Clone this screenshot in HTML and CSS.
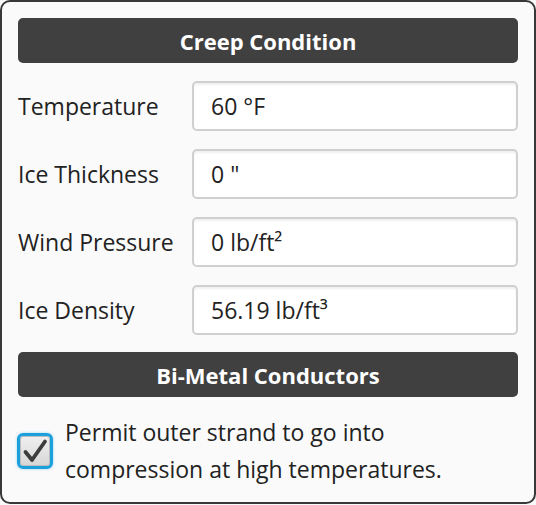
FILE: index.html
```html
<!DOCTYPE html>
<html lang="en">
<head>
  <meta charset="UTF-8" />
  <title>Creep Condition</title>
  <link rel="stylesheet" href="styles.css">
</head>
<body>
  <div class="panel">
    <div class="section-title">Creep Condition</div>
    <div class="fields">
      <label class="field-label">Temperature</label>
      <div class="field-box">60 °F</div>
      <label class="field-label">Ice Thickness</label>
      <div class="field-box">0 "</div>
      <label class="field-label">Wind Pressure</label>
      <div class="field-box">0 lb/ft²</div>
      <label class="field-label">Ice Density</label>
      <div class="field-box">56.19 lb/ft³</div>
    </div>
    <div class="section-title">Bi-Metal Conductors</div>
    <div class="check-row">
      <span class="checkbox">
        <svg width="26" height="26" viewBox="0 0 26 26">
          <path d="M3.5 14 L10 22 L23 3.5" fill="none" stroke="#3c3c3c" stroke-width="3.8" stroke-linejoin="round" stroke-linecap="round"/>
        </svg>
      </span>
      <span class="check-text">Permit outer strand to go into compression at high temperatures.</span>
    </div>
  </div>
</body>
</html>
```

FILE: styles.css
```css
html, body {
  margin: 0;
  background: #f9f9f9;
}

body {
  font-family: "Open Sans", "Noto Sans", sans-serif;
  color: #222;
}

.panel {
  box-sizing: border-box;
  width: 536px;
  height: 504px;
  border: 2px solid #383838;
  border-radius: 10px;
  background: #fafafa;
  padding: 16px;
}

.section-title {
  height: 45px;
  background: #404040;
  border-radius: 5px;
  color: #fff;
  font-weight: bold;
  font-size: 22px;
  display: flex;
  align-items: center;
  justify-content: center;
}

.fields {
  display: grid;
  grid-template-columns: 174px 1fr;
  grid-auto-rows: 50px;
  row-gap: 18px;
  margin: 18px 0 17px;
}

.field-label {
  display: flex;
  align-items: center;
  font-size: 23px;
}

.field-box {
  box-sizing: border-box;
  background: #fff;
  border: 2px solid #d0d0d0;
  border-radius: 5px;
  box-shadow: inset 0 2px 2px rgba(0, 0, 0, 0.06);
  display: flex;
  align-items: center;
  padding-left: 17px;
  font-size: 23px;
}

.check-row {
  display: flex;
  align-items: center;
  gap: 12px;
  margin-top: 17px;
}

.checkbox {
  box-sizing: border-box;
  width: 36px;
  height: 36px;
  flex: none;
  border: 3px solid #1aa0dc;
  border-radius: 6px;
  box-shadow: 0 0 3px rgba(26, 160, 220, 0.4), inset 0 0 0 1px #bdbdbd;
  background: linear-gradient(#f0f0f0, #d6d6d6);
  display: flex;
  align-items: center;
  justify-content: center;
  margin-left: -1px;
}

.checkbox svg {
  display: block;
}

.check-text {
  font-size: 23px;
  line-height: 37px;
  width: 420px;
}
```
